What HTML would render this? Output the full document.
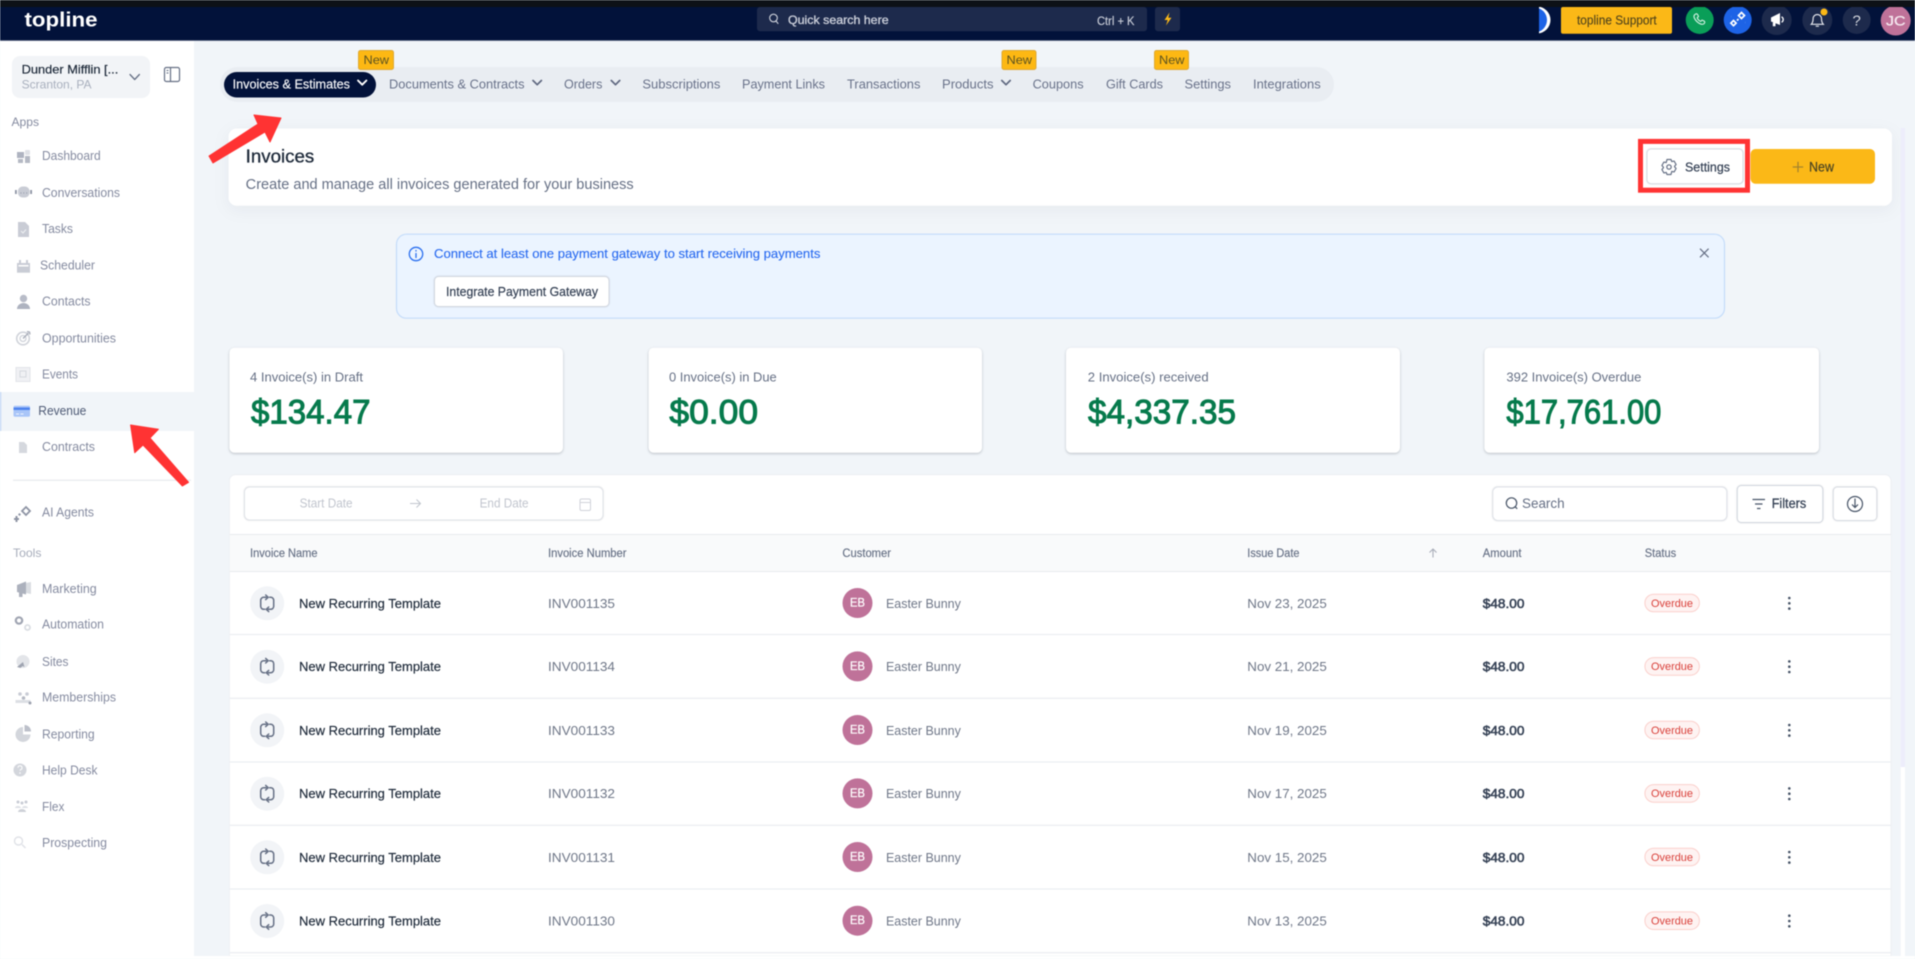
<!DOCTYPE html>
<html lang="en"><head><meta charset="utf-8"><title>Invoices</title>
<style>
html,body{margin:0;padding:0;width:1915px;height:959px;overflow:hidden;background:#f1f5f9}
svg{display:block;filter:blur(.45px)}
text{font-family:"Liberation Sans",sans-serif;white-space:pre}
.s text{font-size:12.5px;fill:#858ba0}
.tb text{font-size:12.5px;fill:#69728a}
.h text{font-size:11.5px;fill:#667085;stroke:#667085;stroke-width:.15px}
.n text{font-size:13px;fill:#1d2939;stroke:#1d2939;stroke-width:.18px}
.g text{font-size:13px;fill:#6f7788}
.a text{font-size:13px;fill:#344054;stroke:#344054;stroke-width:.55px}
.o text{font-size:11px;fill:#d9403a}
.av text{font-size:11.5px;fill:#fff;stroke:#fff;stroke-width:.2px}
.lab text{font-size:12.5px;fill:#667085}
.amt text{font-size:34px;fill:#067a4c;stroke:#067a4c;stroke-width:1px}
.ic{fill:#c9ccd5}
.card{filter:drop-shadow(0 1px 1.2px rgba(16,24,40,.24))}
.hero{filter:drop-shadow(0 4px 8px rgba(16,24,40,.05))}
.btn{filter:drop-shadow(0 .6px .8px rgba(16,24,40,.16))}
</style></head><body>
<svg width="1915" height="959" viewBox="0 0 1915 959" xmlns="http://www.w3.org/2000/svg">
<defs>
<g id="rec" fill="none" stroke="#667085" stroke-width="1.5" stroke-linecap="round" stroke-linejoin="round">
<path d="M-1 -6H-3.500A3 3 0 0 0 -6.500 -3V3A3 3 0 0 0 -3.500 6H-2.500"/>
<path d="M1 6H3.500A3 3 0 0 0 6.500 3V-3A3 3 0 0 0 3.500 -6H2.500"/>
<path d="M-1.500 -8.300L1 -6L-1.500 -3.700"/><path d="M1.500 3.700L-1 6L1.500 8.300"/>
</g>
</defs>
<rect width="1915" height="959" fill="#f1f5f9"/>
<!-- sidebar -->
<rect x="0" y="40" width="194" height="919" fill="#fff"/>
<rect x="12" y="56" width="138" height="42" rx="8" fill="#f2f4f7"/>
<text x="21.600" y="73.400" font-size="12" fill="#1d2939" stroke="#1d2939" stroke-width=".2" textLength="96.700" lengthAdjust="spacingAndGlyphs">Dunder Mifflin [...</text>
<text x="21.600" y="88.500" font-size="12" fill="#a9b0be" textLength="70" lengthAdjust="spacingAndGlyphs">Scranton, PA</text>
<path d="M130 74.500l4.700 5 4.700-5" fill="none" stroke="#667085" stroke-width="1.300" stroke-linecap="round" stroke-linejoin="round"/>
<rect x="164.500" y="67.500" width="15" height="14" rx="1.800" fill="none" stroke="#667085" stroke-width="1.200"/>
<path d="M170.500 67.500v14" stroke="#667085" stroke-width="1.200"/>
<path d="M166.500 70.500h2M166.500 73h2" stroke="#667085" stroke-width="1"/>
<text x="11.500" y="126" font-size="12" fill="#858ba0" textLength="27.500" lengthAdjust="spacingAndGlyphs">Apps</text>
<rect x="0" y="392" width="194" height="39" fill="#f1f5f9"/>
<rect x="0" y="392" width="1.200" height="39" fill="#c3d6f6"/>
<rect x="13" y="479.500" width="178" height="1.500" fill="#eceef1"/>
<text x="13" y="557" font-size="12" fill="#a7adbb" textLength="28.500" lengthAdjust="spacingAndGlyphs">Tools</text>
<!-- sidebar icons -->
<g class="ic">
<path d="M17 152h7v6h-7z" fill="#aeb3c0"/><path d="M18 159h5v4h-5zM25 156h5v7h-5z" fill="#b5b9c4"/><rect x="25" y="150" width="5" height="5" rx="1" fill="#dfe1e6"/>
<rect x="18" y="186.500" width="11.500" height="11" rx="4.500"/><rect x="15" y="190" width="1.800" height="4" fill="#8d93a3"/><rect x="30.200" y="190" width="1.800" height="4" fill="#8d93a3"/><path d="M20.500 193h.8M23.400 193h.8M26.300 193h.8" stroke="#8d93a3" stroke-width="1.200"/>
<path d="M18 222h7l4 4v11H18z"/><path d="M21 231l2 2 3-3.500" fill="none" stroke="#eef0f3" stroke-width="1"/>
<path d="M17 263h13v9.700H17z"/><rect x="19" y="260" width="2" height="3"/><rect x="26" y="260" width="2" height="3"/><rect x="18.500" y="265" width="10" height="1.500" fill="#fff"/>
<circle cx="23.500" cy="298.500" r="3.700" fill="#b8bcc8"/><path d="M17 309a6.500 6 0 0 1 13 0z" fill="#aeb3c0"/>
<circle cx="23" cy="338.500" r="6.300" fill="none" stroke="#d0d3da" stroke-width="1.600"/><circle cx="23" cy="338.500" r="3" fill="none" stroke="#d0d3da" stroke-width="1.300"/><path d="M23 338.500l5.500-5.500M27 331.500l2.500.5.500 2.500" fill="none" stroke="#a8adb9" stroke-width="1.300"/>
<rect x="16" y="367.500" width="14" height="14" fill="#f0f1f4" stroke="#e2e4e9"/><rect x="20" y="371" width="6" height="6" fill="none" stroke="#d5d8de"/>
<path d="M19 442h5l3 3v8h-8z" fill="#d5d8de"/>
<path d="M14 518h5v2h-5zM15.500 516h2v6h-2z" fill="#8f95a5"/><path d="M26 507l4 4-4 4-4-4z" fill="none" stroke="#8f95a5" stroke-width="1.800"/><path d="M19.500 513l1.500 1.500-1.500 1.500-1.500-1.500z" fill="#8f95a5"/>
<path d="M17 585l9-3.500v13l-9-2.500zM19 592h3.500v5H19z" fill="#acb1bd"/><path d="M26 583l5-1v12l-5-1z" fill="#dadde2"/>
<circle cx="19" cy="620.500" r="3.200" fill="none" stroke="#a0a5b2" stroke-width="2.200"/><circle cx="27.500" cy="627.500" r="2.500" fill="none" stroke="#dadde2" stroke-width="1.800"/>
<circle cx="23" cy="661.500" r="6.500" fill="#e3e5e9"/><path d="M17 667l6-5 1.500 5-2-1-2 2z" fill="#9ea3b0"/>
<circle cx="20" cy="694" r="1.800"/><circle cx="27" cy="694" r="1.800"/><path d="M15.500 703h15v-3h-15z" fill="#dcdfe4"/><circle cx="23.500" cy="698" r="1.800" fill="#b5b9c4"/><circle cx="30" cy="703" r="1.500" fill="#9ea3b0"/>
<path d="M23 727a7.500 7.500 0 1 0 7.500 7.500H23z" fill="#d3d6dc"/><path d="M24.500 725a6.500 6.500 0 0 1 6.500 6.500h-6.500z" fill="#bcc0ca"/>
<circle cx="20" cy="770" r="6.500" fill="#d3d6dc"/><circle cx="20" cy="773" r=".8" fill="#fff"/><path d="M18 767.700a2 2 0 1 1 2.500 2l-.5 1" fill="none" stroke="#fff" stroke-width="1"/>
<circle cx="18" cy="802" r="1.500"/><circle cx="26" cy="802" r="1.500"/><circle cx="22" cy="803" r="1.500"/><path d="M15 808a3 2 0 0 1 6 0zM22 808a3 2 0 0 1 6 0z" fill="#dde0e5"/><path d="M18 812a4 3 0 0 1 8 0z" fill="#ced1d8"/>
<circle cx="18.500" cy="841" r="4" fill="none" stroke="#e0e2e7" stroke-width="1.400"/><path d="M22 844.500l3.500 3.500" stroke="#e0e2e7" stroke-width="1.400"/>
</g>
<rect x="13.500" y="405.700" width="16.500" height="11" rx="1.500" fill="#a9c5f8"/><rect x="13.500" y="407.500" width="16.500" height="2.500" fill="#4f84ee"/><path d="M16 414h3M20.500 414h3" stroke="#eef3fd" stroke-width="1"/>
<g class="s">
<text x="42" y="160.200" textLength="58.700" lengthAdjust="spacingAndGlyphs">Dashboard</text>
<text x="42" y="197" textLength="78" lengthAdjust="spacingAndGlyphs">Conversations</text>
<text x="42" y="233" textLength="31" lengthAdjust="spacingAndGlyphs">Tasks</text>
<text x="40" y="269.500" textLength="55" lengthAdjust="spacingAndGlyphs">Scheduler</text>
<text x="42" y="305.500" textLength="48.600" lengthAdjust="spacingAndGlyphs">Contacts</text>
<text x="42" y="342.500" textLength="74" lengthAdjust="spacingAndGlyphs">Opportunities</text>
<text x="42" y="378.500" textLength="36" lengthAdjust="spacingAndGlyphs">Events</text>
<text x="38.300" y="415" textLength="48" lengthAdjust="spacingAndGlyphs" style="fill:#4e5a75">Revenue</text>
<text x="42" y="451" textLength="53" lengthAdjust="spacingAndGlyphs">Contracts</text>
<text x="42" y="516.500" textLength="52" lengthAdjust="spacingAndGlyphs">AI Agents</text>
<text x="42" y="593" textLength="54.700" lengthAdjust="spacingAndGlyphs">Marketing</text>
<text x="42" y="628.500" textLength="62" lengthAdjust="spacingAndGlyphs">Automation</text>
<text x="42" y="666" textLength="26.500" lengthAdjust="spacingAndGlyphs">Sites</text>
<text x="42" y="701.500" textLength="74" lengthAdjust="spacingAndGlyphs">Memberships</text>
<text x="42" y="738.500" textLength="52.700" lengthAdjust="spacingAndGlyphs">Reporting</text>
<text x="42" y="774.500" textLength="55.500" lengthAdjust="spacingAndGlyphs">Help Desk</text>
<text x="42" y="811" textLength="22.400" lengthAdjust="spacingAndGlyphs">Flex</text>
<text x="42" y="847" textLength="65" lengthAdjust="spacingAndGlyphs">Prospecting</text>
</g>
<!-- tab bar -->
<rect x="220" y="67" width="1114" height="35" rx="17.500" fill="#e9edf2"/>
<rect x="224" y="72" width="152" height="25.500" rx="12.700" fill="#02123a"/>
<text x="232.600" y="88.500" font-size="12.500" fill="#f4f5f8" stroke="#f4f5f8" stroke-width=".2" textLength="117.400" lengthAdjust="spacingAndGlyphs">Invoices &amp; Estimates</text>
<path d="M358 80.500l4.200 4.200 4.200-4.200" fill="none" stroke="#fff" stroke-width="1.900" stroke-linecap="round" stroke-linejoin="round"/>
<g class="tb">
<text x="389" y="88.500" textLength="135.500" lengthAdjust="spacingAndGlyphs">Documents &amp; Contracts</text>
<text x="564" y="88.500" textLength="38.400" lengthAdjust="spacingAndGlyphs">Orders</text>
<text x="642.400" y="88.500" textLength="78" lengthAdjust="spacingAndGlyphs">Subscriptions</text>
<text x="742" y="88.500" textLength="83" lengthAdjust="spacingAndGlyphs">Payment Links</text>
<text x="847" y="88.500" textLength="73.400" lengthAdjust="spacingAndGlyphs">Transactions</text>
<text x="942" y="88.500" textLength="51.500" lengthAdjust="spacingAndGlyphs">Products</text>
<text x="1032.600" y="88.500" textLength="51" lengthAdjust="spacingAndGlyphs">Coupons</text>
<text x="1106" y="88.500" textLength="57" lengthAdjust="spacingAndGlyphs">Gift Cards</text>
<text x="1184.500" y="88.500" textLength="46.500" lengthAdjust="spacingAndGlyphs">Settings</text>
<text x="1253" y="88.500" textLength="67.700" lengthAdjust="spacingAndGlyphs">Integrations</text>
</g>
<g fill="none" stroke="#5f6880" stroke-width="1.700" stroke-linecap="round" stroke-linejoin="round">
<path d="M533 80.500l4.200 4.200 4.200-4.200M611.300 80.500l4.200 4.200 4.200-4.200M1001.800 80.500l4.200 4.200 4.200-4.200"/>
</g>
<g fill="#fdb813" stroke="#dfa935" stroke-width="1">
<rect x="358.500" y="50.500" width="35" height="19" rx="2"/><rect x="1002" y="50.500" width="34" height="19" rx="2"/><rect x="1154.500" y="50.500" width="34" height="19" rx="2"/>
</g>
<g font-size="12" fill="#5c5320">
<text x="363.500" y="64.200" textLength="25.500" lengthAdjust="spacingAndGlyphs">New</text>
<text x="1006.500" y="64.200" textLength="25.500" lengthAdjust="spacingAndGlyphs">New</text>
<text x="1159" y="64.200" textLength="25.500" lengthAdjust="spacingAndGlyphs">New</text>
</g>
<!-- hero card -->
<rect class="hero" x="228.600" y="128.500" width="1663.400" height="77.200" rx="8" fill="#fff"/>
<text x="245.700" y="162.500" font-size="18" fill="#1d2939" stroke="#1d2939" stroke-width=".3" textLength="68.600" lengthAdjust="spacingAndGlyphs">Invoices</text>
<text x="245.700" y="188.800" font-size="14.500" fill="#667085" textLength="388" lengthAdjust="spacingAndGlyphs">Create and manage all invoices generated for your business</text>
<rect class="btn" x="1647" y="149" width="96" height="34.700" rx="4" fill="#fff" stroke="#d7dbe2"/>
<g transform="translate(1669 167)" fill="none" stroke="#667085" stroke-width="1.200" stroke-linejoin="round"><path d="M-2-7.500h4l.8 2.100 2.300-.5 2 3.400-1.500 1.700.0.600 1.500 1.700-2 3.400-2.300-.5L2 7.500h-4l-.8-2.100-2.300.5-2-3.400 1.500-1.700v-.6l-1.500-1.700 2-3.400 2.300.5z"/><circle r="2.200"/></g>
<text x="1685" y="171.500" font-size="13" fill="#344054" stroke="#344054" stroke-width=".2" textLength="45" lengthAdjust="spacingAndGlyphs">Settings</text>
<rect x="1750.500" y="149" width="124.500" height="34.700" rx="5" fill="#fbb817"/>
<path d="M1798 161.700v10.500M1792.700 167h10.500" stroke="#a5842d" stroke-width="1.300"/>
<text x="1809" y="171.500" font-size="13.500" fill="#4a4423" stroke="#4a4423" stroke-width=".2" textLength="25" lengthAdjust="spacingAndGlyphs">New</text>
<!-- red frame + arrows -->
<rect x="1640.500" y="141.400" width="107" height="48.800" fill="none" stroke="#ff3333" stroke-width="5"/>
<polygon points="209,156 258,124 254,115 281,118 270,142 265,132 213,163" fill="#ff3333" stroke="#ff3333" stroke-width="1" stroke-linejoin="round"/>
<polygon points="130.600,425 158.400,429.300 150,438 188.600,482.300 182.400,486 143,445 134.700,452.700" fill="#ff3333" stroke="#ff3333" stroke-width="1" stroke-linejoin="round"/>
<!-- alert -->
<rect x="396.500" y="234.200" width="1328" height="84" rx="10" fill="#ebf4ff" stroke="#c4dcfa" stroke-width="1.200"/>
<circle cx="416" cy="254" r="6.700" fill="none" stroke="#2a6fef" stroke-width="1.300"/><path d="M416 253.500v4M416 250.500v.5" stroke="#2a6fef" stroke-width="1.300" stroke-linecap="round"/>
<text x="434" y="258.200" font-size="13" fill="#2a6bf0" stroke="#2a6bf0" stroke-width=".12" textLength="386.400" lengthAdjust="spacingAndGlyphs">Connect at least one payment gateway to start receiving payments</text>
<rect class="btn" x="434.500" y="276.500" width="174.500" height="30" rx="4" fill="#fff" stroke="#d2d7df"/>
<text x="446" y="296" font-size="13" fill="#344054" stroke="#344054" stroke-width=".2" textLength="152" lengthAdjust="spacingAndGlyphs">Integrate Payment Gateway</text>
<path d="M1700 248.700l8.600 8.600M1708.600 248.700l-8.600 8.600" stroke="#667085" stroke-width="1.200"/>
<!-- stat cards -->
<g fill="#fff" class="card">
<rect x="229.400" y="347.700" width="333.600" height="105" rx="5"/>
<rect x="648.600" y="347.700" width="333.400" height="105" rx="5"/>
<rect x="1066" y="347.700" width="334" height="105" rx="5"/>
<rect x="1484.400" y="347.700" width="334.600" height="105" rx="5"/>
</g>
<g class="lab">
<text x="250" y="381.400" textLength="113" lengthAdjust="spacingAndGlyphs">4 Invoice(s) in Draft</text>
<text x="669" y="381.400" textLength="107.700" lengthAdjust="spacingAndGlyphs">0 Invoice(s) in Due</text>
<text x="1087.800" y="381.400" textLength="120.800" lengthAdjust="spacingAndGlyphs">2 Invoice(s) received</text>
<text x="1506.400" y="381.400" textLength="135" lengthAdjust="spacingAndGlyphs">392 Invoice(s) Overdue</text>
</g>
<g class="amt">
<text x="251" y="423.300" textLength="119.500" lengthAdjust="spacingAndGlyphs">$134.47</text>
<text x="669.400" y="423.300" textLength="88.700" lengthAdjust="spacingAndGlyphs">$0.00</text>
<text x="1088" y="423.300" textLength="148" lengthAdjust="spacingAndGlyphs">$4,337.35</text>
<text x="1506.400" y="423.300" textLength="155" lengthAdjust="spacingAndGlyphs">$17,761.00</text>
</g>
<!-- table card -->
<path d="M229.400 956V480.700a6 6 0 0 1 6-6H1885a6 6 0 0 1 6 6V956z" fill="#fff" stroke="#eceef2" stroke-width=".8"/>
<rect class="btn" x="244.500" y="487" width="358.500" height="33" rx="5" fill="#fff" stroke="#e0e3e8"/>
<text x="299.600" y="507.500" font-size="13" fill="#c1c5ce" textLength="53" lengthAdjust="spacingAndGlyphs">Start Date</text>
<path d="M410 503.500h10M416.500 499.500l4 4-4 4" fill="none" stroke="#c1c5ce" stroke-width="1"/>
<text x="479.600" y="507.500" font-size="13" fill="#c1c5ce" textLength="49" lengthAdjust="spacingAndGlyphs">End Date</text>
<rect x="580" y="499" width="10.500" height="11.500" rx="1.500" fill="none" stroke="#d0d3da" stroke-width="1"/><path d="M580 502.500h10.500" stroke="#d0d3da"/>
<rect class="btn" x="1492.800" y="487" width="234" height="33.500" rx="5" fill="#fff" stroke="#dfe2e8"/>
<circle cx="1511.500" cy="503" r="5.200" fill="none" stroke="#475467" stroke-width="1.200"/><path d="M1515.200 506.800l2 2" stroke="#475467" stroke-width="1.200"/>
<text x="1522" y="508" font-size="13.500" fill="#667085" textLength="42.600" lengthAdjust="spacingAndGlyphs">Search</text>
<rect class="btn" x="1737.300" y="485.500" width="85.500" height="37" rx="4" fill="#fff" stroke="#d2d7df"/>
<path d="M1752.500 499.500h12.500M1755 504h7.500M1757 508.500h3.500" stroke="#475467" stroke-width="1.300"/>
<text x="1771.700" y="508" font-size="13.500" fill="#344054" stroke="#344054" stroke-width=".25" textLength="34.500" lengthAdjust="spacingAndGlyphs">Filters</text>
<rect class="btn" x="1833.300" y="487" width="43.500" height="33.500" rx="4" fill="#fff" stroke="#d7dbe2"/>
<circle cx="1855" cy="504" r="7.500" fill="none" stroke="#475467" stroke-width="1.200"/><path d="M1855 498.500v9M1852 504.500l3 3 3-3" fill="none" stroke="#475467" stroke-width="1.200"/>
<!-- table head -->
<rect x="229.800" y="534.300" width="1661" height="37.400" fill="#f9fafb"/>
<path d="M229.800 534.500H1891M229.800 571.500H1891" stroke="#e8eaee" stroke-width="1"/>
<g class="h">
<text x="250" y="557" textLength="67.500" lengthAdjust="spacingAndGlyphs">Invoice Name</text>
<text x="548" y="557" textLength="78.500" lengthAdjust="spacingAndGlyphs">Invoice Number</text>
<text x="842.400" y="557" textLength="48.600" lengthAdjust="spacingAndGlyphs">Customer</text>
<text x="1247.300" y="557" textLength="52.200" lengthAdjust="spacingAndGlyphs">Issue Date</text>
<text x="1482.800" y="557" textLength="38.700" lengthAdjust="spacingAndGlyphs">Amount</text>
<text x="1644.800" y="557" textLength="31.400" lengthAdjust="spacingAndGlyphs">Status</text>
</g>
<path d="M1433 557.500v-8M1429.500 552.500l3.500-3.500 3.500 3.500" fill="none" stroke="#a9aeb9" stroke-width="1.100"/>
<path d="M229.800 634.500H1891M229.800 698.300H1891M229.800 762H1891M229.800 825.300H1891M229.800 889H1891M229.800 952.700H1891" stroke="#eceef2" stroke-width="1.300"/>
<!-- rows -->
<g fill="#f2f4f7"><circle cx="267.200" cy="603.300" r="17"/><circle cx="267.200" cy="666.700" r="17"/><circle cx="267.200" cy="730.300" r="17"/><circle cx="267.200" cy="793.700" r="17"/><circle cx="267.200" cy="857.300" r="17"/><circle cx="267.200" cy="921" r="17"/></g>
<use href="#rec" x="267.200" y="603.300"/><use href="#rec" x="267.200" y="666.700"/><use href="#rec" x="267.200" y="730.300"/><use href="#rec" x="267.200" y="793.700"/><use href="#rec" x="267.200" y="857.300"/><use href="#rec" x="267.200" y="921"/>
<g class="n">
<text x="299" y="607.800" textLength="142" lengthAdjust="spacingAndGlyphs">New Recurring Template</text>
<text x="299" y="671.200" textLength="142" lengthAdjust="spacingAndGlyphs">New Recurring Template</text>
<text x="299" y="734.800" textLength="142" lengthAdjust="spacingAndGlyphs">New Recurring Template</text>
<text x="299" y="798.200" textLength="142" lengthAdjust="spacingAndGlyphs">New Recurring Template</text>
<text x="299" y="861.800" textLength="142" lengthAdjust="spacingAndGlyphs">New Recurring Template</text>
<text x="299" y="925.500" textLength="142" lengthAdjust="spacingAndGlyphs">New Recurring Template</text>
</g>
<g class="g">
<text x="548" y="607.800" textLength="67" lengthAdjust="spacingAndGlyphs">INV001135</text>
<text x="548" y="671.200" textLength="67" lengthAdjust="spacingAndGlyphs">INV001134</text>
<text x="548" y="734.800" textLength="67" lengthAdjust="spacingAndGlyphs">INV001133</text>
<text x="548" y="798.200" textLength="67" lengthAdjust="spacingAndGlyphs">INV001132</text>
<text x="548" y="861.800" textLength="67" lengthAdjust="spacingAndGlyphs">INV001131</text>
<text x="548" y="925.500" textLength="67" lengthAdjust="spacingAndGlyphs">INV001130</text>
<text x="886" y="607.800" textLength="74.800" lengthAdjust="spacingAndGlyphs">Easter Bunny</text>
<text x="886" y="671.200" textLength="74.800" lengthAdjust="spacingAndGlyphs">Easter Bunny</text>
<text x="886" y="734.800" textLength="74.800" lengthAdjust="spacingAndGlyphs">Easter Bunny</text>
<text x="886" y="798.200" textLength="74.800" lengthAdjust="spacingAndGlyphs">Easter Bunny</text>
<text x="886" y="861.800" textLength="74.800" lengthAdjust="spacingAndGlyphs">Easter Bunny</text>
<text x="886" y="925.500" textLength="74.800" lengthAdjust="spacingAndGlyphs">Easter Bunny</text>
<text x="1247.300" y="607.800" textLength="79.500" lengthAdjust="spacingAndGlyphs">Nov 23, 2025</text>
<text x="1247.300" y="671.200" textLength="79.500" lengthAdjust="spacingAndGlyphs">Nov 21, 2025</text>
<text x="1247.300" y="734.800" textLength="79.500" lengthAdjust="spacingAndGlyphs">Nov 19, 2025</text>
<text x="1247.300" y="798.200" textLength="79.500" lengthAdjust="spacingAndGlyphs">Nov 17, 2025</text>
<text x="1247.300" y="861.800" textLength="79.500" lengthAdjust="spacingAndGlyphs">Nov 15, 2025</text>
<text x="1247.300" y="925.500" textLength="79.500" lengthAdjust="spacingAndGlyphs">Nov 13, 2025</text>
</g>
<g fill="#bf7299"><circle cx="857.500" cy="603" r="15"/><circle cx="857.500" cy="666.400" r="15"/><circle cx="857.500" cy="730" r="15"/><circle cx="857.500" cy="793.400" r="15"/><circle cx="857.500" cy="857" r="15"/><circle cx="857.500" cy="920.700" r="15"/></g>
<g class="av">
<text x="850" y="606.500" textLength="15" lengthAdjust="spacingAndGlyphs">EB</text>
<text x="850" y="669.900" textLength="15" lengthAdjust="spacingAndGlyphs">EB</text>
<text x="850" y="733.500" textLength="15" lengthAdjust="spacingAndGlyphs">EB</text>
<text x="850" y="796.900" textLength="15" lengthAdjust="spacingAndGlyphs">EB</text>
<text x="850" y="860.500" textLength="15" lengthAdjust="spacingAndGlyphs">EB</text>
<text x="850" y="924.200" textLength="15" lengthAdjust="spacingAndGlyphs">EB</text>
</g>
<g class="a">
<text x="1482.800" y="607.800" textLength="41.600" lengthAdjust="spacingAndGlyphs">$48.00</text>
<text x="1482.800" y="671.200" textLength="41.600" lengthAdjust="spacingAndGlyphs">$48.00</text>
<text x="1482.800" y="734.800" textLength="41.600" lengthAdjust="spacingAndGlyphs">$48.00</text>
<text x="1482.800" y="798.200" textLength="41.600" lengthAdjust="spacingAndGlyphs">$48.00</text>
<text x="1482.800" y="861.800" textLength="41.600" lengthAdjust="spacingAndGlyphs">$48.00</text>
<text x="1482.800" y="925.500" textLength="41.600" lengthAdjust="spacingAndGlyphs">$48.00</text>
</g>
<g fill="#fef3f2" stroke="#fbd0cc" stroke-width="1">
<rect x="1644.900" y="594.200" width="54.500" height="17.600" rx="8.800"/>
<rect x="1644.900" y="657.600" width="54.500" height="17.600" rx="8.800"/>
<rect x="1644.900" y="721.200" width="54.500" height="17.600" rx="8.800"/>
<rect x="1644.900" y="784.600" width="54.500" height="17.600" rx="8.800"/>
<rect x="1644.900" y="848.200" width="54.500" height="17.600" rx="8.800"/>
<rect x="1644.900" y="911.900" width="54.500" height="17.600" rx="8.800"/>
</g>
<g class="o">
<text x="1651" y="606.800" textLength="42" lengthAdjust="spacingAndGlyphs">Overdue</text>
<text x="1651" y="670.200" textLength="42" lengthAdjust="spacingAndGlyphs">Overdue</text>
<text x="1651" y="733.800" textLength="42" lengthAdjust="spacingAndGlyphs">Overdue</text>
<text x="1651" y="797.200" textLength="42" lengthAdjust="spacingAndGlyphs">Overdue</text>
<text x="1651" y="860.800" textLength="42" lengthAdjust="spacingAndGlyphs">Overdue</text>
<text x="1651" y="924.500" textLength="42" lengthAdjust="spacingAndGlyphs">Overdue</text>
</g>
<g fill="#475467">
<circle cx="1789.300" cy="598" r="1.300"/><circle cx="1789.300" cy="603.300" r="1.300"/><circle cx="1789.300" cy="608.600" r="1.300"/>
<circle cx="1789.300" cy="661.400" r="1.300"/><circle cx="1789.300" cy="666.700" r="1.300"/><circle cx="1789.300" cy="672" r="1.300"/>
<circle cx="1789.300" cy="725" r="1.300"/><circle cx="1789.300" cy="730.300" r="1.300"/><circle cx="1789.300" cy="735.600" r="1.300"/>
<circle cx="1789.300" cy="788.400" r="1.300"/><circle cx="1789.300" cy="793.700" r="1.300"/><circle cx="1789.300" cy="799" r="1.300"/>
<circle cx="1789.300" cy="852" r="1.300"/><circle cx="1789.300" cy="857.300" r="1.300"/><circle cx="1789.300" cy="862.600" r="1.300"/>
<circle cx="1789.300" cy="915.700" r="1.300"/><circle cx="1789.300" cy="921" r="1.300"/><circle cx="1789.300" cy="926.300" r="1.300"/>
</g>
<!-- scrollbar -->
<rect x="1900.700" y="128" width="4.300" height="639" fill="#ededfb"/>
<rect x="1900.700" y="767" width="4.300" height="189" fill="#fff"/>
<rect x="0" y="956" width="1915" height="3" fill="#fff"/>
<!-- header -->
<rect x="0" y="7" width="1915" height="33.500" fill="#02123a"/>
<rect x="0" y="40" width="1915" height=".8" fill="#3c4a6b"/>
<text x="24.500" y="26.500" font-size="20.500" font-weight="700" fill="#fff" textLength="73" lengthAdjust="spacingAndGlyphs">topline</text>
<rect x="757" y="7" width="390" height="24.300" rx="3" fill="#1d2a4c"/>
<circle cx="773.500" cy="18" r="3.800" fill="none" stroke="#cfd3dc" stroke-width="1.100"/><path d="M776 21l2.300 2.800" stroke="#cfd3dc" stroke-width="1.100"/>
<text x="788" y="23.800" font-size="12" fill="#c9cdd8" stroke="#c9cdd8" stroke-width=".35" textLength="100.600" lengthAdjust="spacingAndGlyphs">Quick search here</text>
<text x="1097" y="25" font-size="11.500" fill="#c9cdd8" stroke="#c9cdd8" stroke-width=".15" textLength="37.500" lengthAdjust="spacingAndGlyphs">Ctrl + K</text>
<rect x="1155" y="7" width="25" height="24.300" rx="3" fill="#1d2a4c"/>
<path d="M1169.500 12.500l-5 7.500h3.200l-1.700 5.500 5.500-7.700h-3.200z" fill="#fbb817"/>
<circle cx="1537" cy="20" r="13.500" fill="#fff"/><circle cx="1534.500" cy="20" r="12.500" fill="#1d63e6"/><rect x="1518" y="7" width="21" height="33" fill="#02123a"/>
<rect x="1561" y="7" width="111" height="26.700" rx="2" fill="#fbb817"/>
<text x="1577" y="24.500" font-size="12.500" fill="#55471c" stroke="#55471c" stroke-width=".15" textLength="79.700" lengthAdjust="spacingAndGlyphs">topline Support</text>
<circle cx="1699.700" cy="20" r="14" fill="#0a9e58"/>
<path d="M1695 14.500c1-1 2.200-.8 2.700.2l.8 1.800-1.300 1.300c.6 1.500 2 3 3.500 3.600l1.300-1.300 2 .9c.9.500 1 1.700.1 2.600-1.200 1.100-2.800 1-4.800-.2-2.300-1.400-4-3.200-5-5.500-.6-1.500-.3-2.700.7-3.400z" fill="none" stroke="#d8f3e5" stroke-width="1.100"/>
<circle cx="1737.700" cy="20" r="14" fill="#1d63e6"/>
<path d="M1741.500 12.500l3 3-3 3-3-3zM1733.500 20.500l2.600 2.600-2.600 2.600-2.600-2.600z" fill="none" stroke="#fff" stroke-width="1.700"/><path d="M1737 20.500l1.500-1.500M1745 22.500h.1M1731 16.500h.1" stroke="#fff" stroke-width="1.700"/>
<circle cx="1776.700" cy="20" r="15" fill="#1d2a4c"/>
<path d="M1771 17.500l9-4.500v12l-9-3.500zM1772.800 22.500h2.700v3.800h-2.700z" fill="#fff"/><path d="M1781.500 16.800a3 3 0 0 1 0 5.400" stroke="#fff" stroke-width="1.300" fill="none"/>
<circle cx="1817.300" cy="20" r="15" fill="#1d2a4c"/>
<path d="M1817.300 14.500a4.200 4.200 0 0 0-4.200 4.200c0 3-1 4.700-1.800 5.600h12c-.8-.9-1.800-2.600-1.800-5.600a4.200 4.200 0 0 0-4.200-4.200zM1815.700 26.200h3.200" fill="none" stroke="#e5e7ec" stroke-width="1.200"/>
<circle cx="1824" cy="12" r="3.500" fill="#fbb817"/>
<circle cx="1856.700" cy="20" r="14" fill="#1d2a4c"/>
<text x="1852.500" y="25.500" font-size="15" fill="#d5d8df">?</text>
<circle cx="1895.700" cy="20.500" r="15" fill="#bf7299"/>
<text x="1886" y="25.500" font-size="13.500" fill="#f5e8ef" stroke="#f5e8ef" stroke-width=".3" textLength="19.500" lengthAdjust="spacingAndGlyphs">JC</text>
<rect x="0" y="0" width="1915" height="7" fill="#0d1117"/>
</svg>
</body></html>
